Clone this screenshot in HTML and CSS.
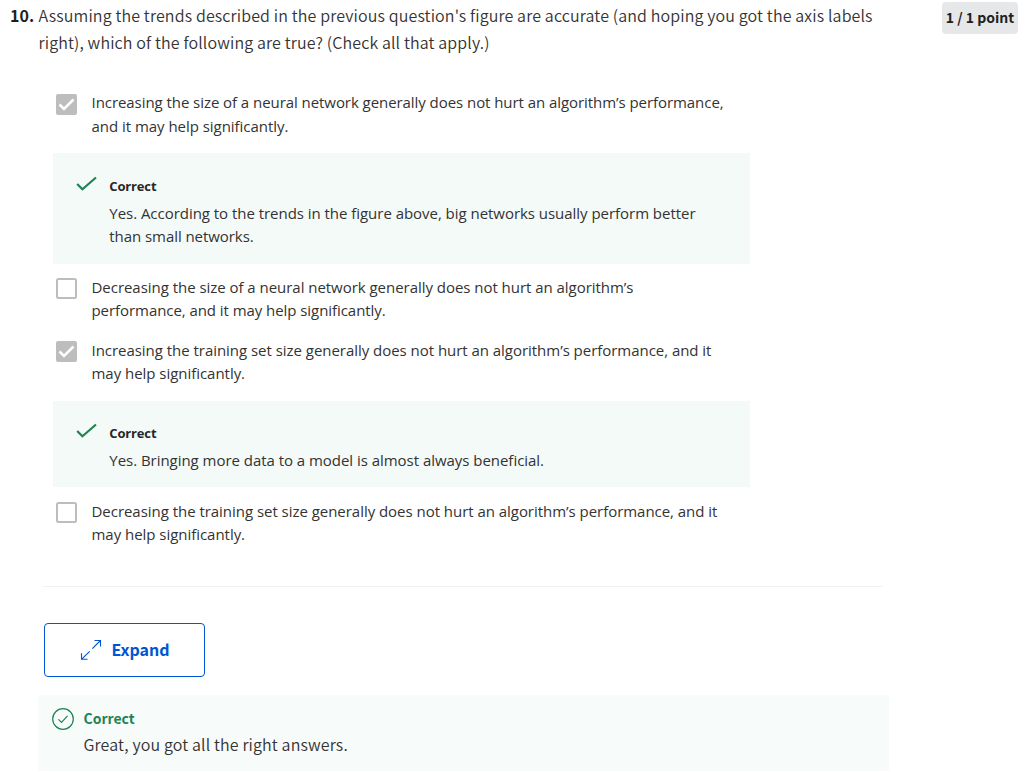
FILE: index.html
```html
<!DOCTYPE html>
<html lang="en">
<head>
<meta charset="utf-8">
<title>Quiz question 10</title>
<link rel="stylesheet" href="styles.css">
</head>
<body>
<main class="question">
  <header class="prompt">
    <span class="number">10.</span>
    <p class="prompt-text">Assuming the trends described in the previous question's figure are accurate (and hoping you got the axis labels<br>right), which of the following are true? (Check all that apply.)</p>
    <span class="points">1 / 1 point</span>
  </header>
  <section class="options">
    <label class="option o1">
      <svg class="box" viewBox="0 0 21 21"><rect width="21" height="21" rx="2" fill="#bdbdbd"/><path d="M3.5 10.5l4.5 4.5L17.5 5.5" fill="none" stroke="#fff" stroke-width="2.5"/></svg>
      <span class="text"><span class="tight">Increasing the size of a neural network generally does not hurt an algorithm’s performance,</span><br>and it may help significantly.</span>
    </label>
    <div class="feedback f1">
      <svg class="tick" viewBox="0 0 22 16"><path d="M1.2 8l5.2 5.3L20 1.5" fill="none" stroke="#1f8354" stroke-width="2.2"/></svg>
      <div><strong class="verdict">Correct</strong>
      <p class="text">Yes. According to the trends in the figure above, big networks usually perform better<br><span class="tight">than small networks.</span></p></div>
    </div>
    <label class="option o2">
      <svg class="box" viewBox="0 0 21 21"><rect x="1" y="1" width="19" height="19" rx="1.5" fill="#fff" stroke="#bdbdbd" stroke-width="2"/></svg>
      <span class="text">Decreasing the size of a neural network generally does not hurt an algorithm’s<br><span class="tight">performance, and it may help significantly.</span></span>
    </label>
    <label class="option o3">
      <svg class="box" viewBox="0 0 21 21"><rect width="21" height="21" rx="2" fill="#bdbdbd"/><path d="M3.5 10.5l4.5 4.5L17.5 5.5" fill="none" stroke="#fff" stroke-width="2.5"/></svg>
      <span class="text">Increasing the training set size generally does not hurt an algorithm’s performance, and it<br>may help significantly.</span>
    </label>
    <div class="feedback f2">
      <svg class="tick" viewBox="0 0 22 16"><path d="M1.2 8l5.2 5.3L20 1.5" fill="none" stroke="#1f8354" stroke-width="2.2"/></svg>
      <div><strong class="verdict">Correct</strong>
      <p class="text">Yes. Bringing more data to a model is almost always beneficial.</p></div>
    </div>
    <label class="option o4">
      <svg class="box" viewBox="0 0 21 21"><rect x="1" y="1" width="19" height="19" rx="1.5" fill="#fff" stroke="#bdbdbd" stroke-width="2"/></svg>
      <span class="text">Decreasing the training set size generally does not hurt an algorithm’s performance, and it<br>may help significantly.</span>
    </label>
  </section>
  <hr class="divider">
  <button class="expand" type="button">
    <svg class="arrows" viewBox="0 0 22 22"><path d="M12.3 10.7L20.5 2.5M14.5 2.5H20.5V8.5M9.7 13.3L1.5 21.3M1.5 15.3V21.3H7.5" fill="none" stroke="#0056d2" stroke-width="1.1"/></svg>
    <span>Expand</span>
  </button>
  <section class="result">
    <svg class="badge" viewBox="0 0 22 22"><circle cx="11" cy="11" r="10.3" fill="none" stroke="#1f8354" stroke-width="1.2"/><path d="M6.5 11.3l3 3L15.5 7.8" fill="none" stroke="#1f8354" stroke-width="1.2"/></svg>
    <div><strong class="result-title">Correct</strong><p class="result-text">Great, you got all the right answers.</p></div>
  </section>
</main>
</body>
</html>
```
FILE: styles.css
```css
* { box-sizing: border-box; }
body { margin: 0; background: #fff; color: #333; font-family: "Noto Sans CJK SC", "Noto Sans", sans-serif; overflow: hidden; }
p { margin: 0; }
svg { display: block; flex: none; }
.question { width: 1026px; height: 772px; }
.prompt { display: flex; height: 93px; padding: 2px 8px 0 10px; font-size: 16px; line-height: 27px; }
.number { width: 28.5px; flex: none; font-weight: 700; color: #1f1f1f; }
.prompt-text { flex: 1; white-space: nowrap; font-weight: 350; letter-spacing: 0.135px; }
.points { flex: none; width: 76px; height: 32px; border-radius: 4px; background: #e5e7e8; color: #1f1f1f; font-size: 14px; font-weight: 700; line-height: 31px; text-align: center; white-space: nowrap; }
.options { display: flex; flex-direction: column; width: 697px; margin-left: 53px; font-family: "Open Sans", "Noto Sans", sans-serif; }
.text { font-size: 15px; line-height: 23px; white-space: nowrap; letter-spacing: -0.035px; }
.tight { letter-spacing: -0.06px; }
.option { display: flex; gap: 14.5px; padding-left: 3px; }
.box { width: 21px; height: 21px; margin-top: 1px; }
.o1 { height: 60px; }
.o1 .text { margin-top: -3px; line-height: 24px; }
.o2 { height: 63px; margin-top: 13px; }
.o2 .text, .o3 .text, .o4 .text { margin-top: -1px; }
.o3 { height: 61px; }
.o4 { height: 86px; margin-top: 14px; }
.feedback { display: flex; background: #f4faf8; padding: 23px 0 0 22.5px; }
.f1 { height: 111px; }
.f2 { height: 86px; padding-top: 22px; }
.tick { width: 22px; height: 16px; margin: -0.5px 11.8px 0 0; }
.verdict { display: block; height: 26px; font-size: 13px; line-height: 20px; letter-spacing: -0.15px; color: #282828; }
.divider { width: 840px; height: 1px; margin: -1px 0 0 43px; border: 0; background: #f2f2f2; }
.expand { display: flex; align-items: center; justify-content: center; gap: 9px; width: 161px; height: 54px; margin: 36px 0 0 44px; padding: 0 0 2px 1px; border: 1px solid #0056d2; border-radius: 4px; background: #fff; color: #0056d2; font: 700 16px/24px "Noto Sans CJK SC", sans-serif; }
.arrows { width: 22px; height: 22px; }
.result { display: flex; gap: 9.2px; width: 851px; height: 76px; margin: 18px 0 0 38px; padding: 13px 14px; background: #f7fbfa; }
.badge { width: 22px; height: 22px; margin-left: 0.3px; }
.result-title { display: block; font-size: 14px; line-height: 22px; margin-top: -1px; color: #1f8354; }
.result-text { font-size: 16px; font-weight: 350; line-height: 28px; margin-top: 1px; letter-spacing: 0.135px; }
```
